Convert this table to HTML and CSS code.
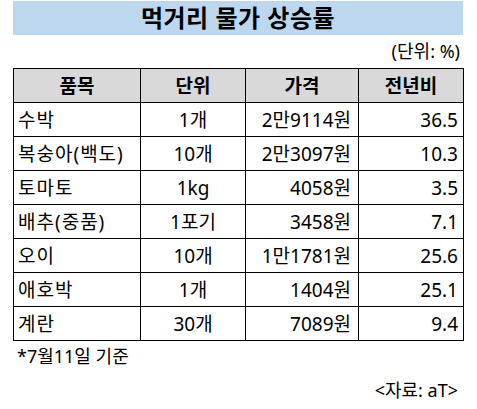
FILE: index.html
```html
<!DOCTYPE html>
<html lang="ko">
<head>
  <meta charset="UTF-8">
  <meta name="viewport" content="width=device-width, initial-scale=1.0">
  <title>먹거리 물가 상승률</title>
  <link rel="stylesheet" href="styles.css">
</head>
<body>
  <div class="sheet">
    <h1 class="title">먹거리 물가 상승률</h1>
    <p class="unit">(단위: %)</p>

    <table class="prices">
      <thead>
        <tr>
          <th class="col-item">품목</th>
          <th class="col-unit">단위</th>
          <th class="col-price">가격</th>
          <th class="col-rate">전년비</th>
        </tr>
      </thead>
      <tbody>
        <tr><td class="item">수박</td><td class="center">1개</td><td class="right price">2만9114원</td><td class="right rate">36.5</td></tr>
        <tr><td class="item">복숭아(백도)</td><td class="center">10개</td><td class="right price">2만3097원</td><td class="right rate">10.3</td></tr>
        <tr><td class="item">토마토</td><td class="center">1kg</td><td class="right price">4058원</td><td class="right rate">3.5</td></tr>
        <tr><td class="item">배추(중품)</td><td class="center">1포기</td><td class="right price">3458원</td><td class="right rate">7.1</td></tr>
        <tr><td class="item">오이</td><td class="center">10개</td><td class="right price">1만1781원</td><td class="right rate">25.6</td></tr>
        <tr><td class="item">애호박</td><td class="center">1개</td><td class="right price">1404원</td><td class="right rate">25.1</td></tr>
        <tr><td class="item">계란</td><td class="center">30개</td><td class="right price">7089원</td><td class="right rate">9.4</td></tr>
      </tbody>
    </table>

    <p class="note">*7월11일 기준</p>
    <p class="source">&lt;자료: aT&gt;</p>
  </div>
</body>
</html>
```

FILE: styles.css
```css
* {
  margin: 0;
  padding: 0;
  box-sizing: border-box;
}

body {
  font-family: "Noto Sans", "Noto Sans CJK KR", sans-serif;
  color: #000;
  background: #fff;
}

.sheet {
  width: 450px;
  margin: 1px 0 0 13px;
}

.title {
  height: 34px;
  background-color: #bdd7ee;
  font-size: 24px;
  font-weight: 700;
  line-height: 34px;
  text-align: center;
  letter-spacing: 0.5px;
}

.unit {
  height: 33px;
  padding-right: 3px;
  font-size: 18px;
  line-height: 32px;
  text-align: right;
}

.prices {
  width: 450px;
  border-collapse: collapse;
  table-layout: fixed;
  font-size: 19px;
}

.prices th,
.prices td {
  height: 34px;
  border: 1px solid #000;
  line-height: 20px;
  white-space: nowrap;
}

.prices th {
  background-color: #d9d9d9;
  font-weight: 700;
  text-align: center;
}

.prices td {
  padding: 0 4px;
}

.prices td.item {
  letter-spacing: 1px;
}

.col-item { width: 127px; }
.col-unit { width: 105px; }
.col-price { width: 113px; }
.col-rate { width: 105px; }

.center { text-align: center; }
.right { text-align: right; }

.prices td.price { padding-right: 7px; }
.prices td.rate { padding-right: 5px; }

.note {
  padding-left: 4px;
  font-size: 18px;
  line-height: 30px;
}

.source {
  margin-top: 4px;
  padding-right: 5px;
  font-size: 18px;
  line-height: 30px;
  text-align: right;
}
```
